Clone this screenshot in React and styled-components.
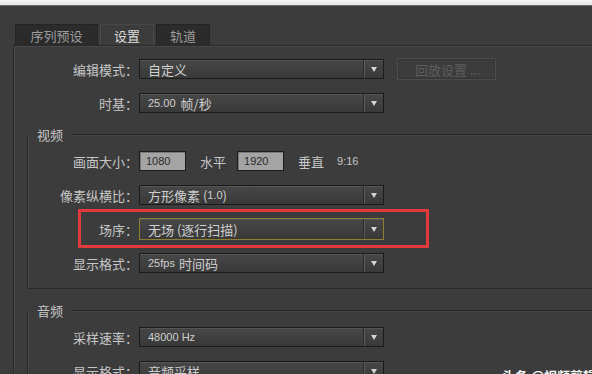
import React from 'react';
import styled, { createGlobalStyle } from 'styled-components';

const Global = createGlobalStyle`
  html, body { margin: 0; padding: 0; background: #3c3c3c; overflow: hidden; }
  body { font-family: "Noto Sans CJK SC", "Liberation Sans", sans-serif; }
`;

const Page = styled.div`
  position: relative;
  width: 592px;
  height: 374px;
  overflow: hidden;
  background: #3c3c3c;
  display: flex;
  flex-direction: column;
`;

const TopStrip = styled.div`
  height: 6px;
  flex-shrink: 0;
  background: linear-gradient(#f4f4f4, #e6e6e6);
  border-bottom: 1px solid #6a6a6a;
  box-sizing: border-box;
`;

const TabBar = styled.div`
  display: flex;
  gap: 2px;
  padding: 18px 0 0 15px;
  height: 21px;
  flex-shrink: 0;
`;

const Tab = styled.div`
  box-sizing: border-box;
  height: 21px;
  width: ${p => p.$w}px;
  display: flex;
  align-items: center;
  justify-content: center;
  font-size: 13px;
  color: ${p => (p.$active ? '#dcdcdc' : '#9c9c9c')};
  background: ${p => (p.$active ? '#3c3c3c' : '#2b2b2b')};
  border: 1px solid ${p => (p.$active ? '#474747' : '#242424')};
  border-bottom: none;
`;

const Panel = styled.div`
  flex: 1;
  margin-left: 13px;
  border-left: 1px solid #2a2a2a;
  border-top: 1px solid #2a2a2a;
  box-shadow: inset 1px 1px 0 #474747;
  padding-top: 13px;
  display: flex;
  flex-direction: column;
`;

const Row = styled.div`
  position: relative;
  display: flex;
  align-items: center;
  height: 20px;
  flex-shrink: 0;
  & + & { margin-top: 14px; }
`;

const Label = styled.div`
  width: ${p => p.$w}px;
  flex-shrink: 0;
  text-align: right;
  white-space: nowrap;
  font-size: 13px;
  color: #c6c6c6;
  margin-right: 1px;
`;

const Select = styled.div`
  box-sizing: border-box;
  width: 245px;
  height: ${p => (p.$focus ? 22 : 20)}px;
  display: flex;
  align-items: stretch;
  border: 1px solid ${p => (p.$focus ? '#8e7e32' : '#1b1b1b')};
  background: linear-gradient(#474747, #393939);
  box-shadow: inset 0 1px 0 #555;
  flex-shrink: 0;
`;

const Value = styled.div`
  flex: 1;
  display: flex;
  align-items: center;
  padding-left: 8px;
  font-size: 13px;
  color: #cfcfcf;
  white-space: nowrap;
`;

const Num = styled.span`
  font-family: "Liberation Sans", Arial, sans-serif;
  font-size: 11px;
  color: ${p => p.$color || 'inherit'};
  margin-right: ${p => p.$mr || 0}px;
`;

const Arrow = styled.div`
  width: 19px;
  display: flex;
  align-items: center;
  justify-content: center;
  border-left: 1px solid #2a2a2a;
  box-shadow: inset 1px 0 0 #5c5c5c;
  &::after {
    content: "";
    width: 0;
    height: 0;
    border-left: 3.5px solid transparent;
    border-right: 3.5px solid transparent;
    border-top: 5px solid #d4d4d4;
  }
`;

const GhostButton = styled.div`
  box-sizing: border-box;
  margin-left: 13px;
  width: 99px;
  height: 22px;
  border: 1px solid #4d4d4d;
  box-shadow: inset 0 0 0 1px #353535;
  display: flex;
  align-items: center;
  padding-left: 17px;
  font-size: 13px;
  color: #5e5e5e;
  white-space: nowrap;
`;

const NumBox = styled.div`
  box-sizing: border-box;
  width: 47px;
  height: 20px;
  border: 1px solid #1c1c1c;
  background: #a4a4a4;
  box-shadow: inset 1px 1px 0 #7a7a7a;
  display: flex;
  align-items: center;
  padding-left: 6px;
  font-family: "Liberation Sans", Arial, sans-serif;
  font-size: 11px;
  color: #2a2a2a;
`;

const Word = styled.span`
  font-size: 13px;
  color: #c6c6c6;
  margin: 0 ${p => p.$r || 0}px 0 ${p => p.$l || 0}px;
  white-space: nowrap;
`;

const Group = styled.div`
  margin-left: 13px;
  margin-top: ${p => p.$mt}px;
  border-left: 1px solid #2a2a2a;
  border-bottom: ${p => (p.$closed ? '1px solid #2a2a2a' : 'none')};
  box-shadow: inset 1px 0 0 #474747;
  padding-bottom: ${p => (p.$closed ? 15 : 0)}px;
  display: flex;
  flex-direction: column;
  flex-shrink: 0;
`;

const GroupHead = styled.div`
  display: flex;
  align-items: center;
  height: 18px;
  margin-top: -9px;
  margin-bottom: 8px;
`;

const GroupTitle = styled.span`
  margin-left: 9px;
  margin-right: 10px;
  font-size: 13px;
  color: #c6c6c6;
`;

const GroupLine = styled.div`
  flex: 1;
  height: 1px;
  background: #262626;
  box-shadow: 0 1px 0 #474747;
`;

const Highlight = styled.div`
  position: absolute;
  left: 50px;
  top: -10px;
  width: 351px;
  height: 39px;
  box-sizing: border-box;
  border: 3px solid #e23a3c;
  pointer-events: none;
`;

const Watermark = styled.div`
  position: absolute;
  left: 502px;
  top: 366px;
  font-size: 13px;
  font-weight: 700;
  color: #f4f4f4;
  white-space: nowrap;
`;

const Dropdown = ({ children, focus }) => (
  <Select $focus={focus}>
    <Value>{children}</Value>
    <Arrow />
  </Select>
);

export default function App() {
  return (
    <Page>
      <Global />
      <TopStrip />
      <TabBar>
        <Tab $w={83}>序列预设</Tab>
        <Tab $w={54} $active>设置</Tab>
        <Tab $w={54}>轨道</Tab>
      </TabBar>
      <Panel>
        <Row>
          <Label $w={124}>编辑模式：</Label>
          <Dropdown>自定义</Dropdown>
          <GhostButton>回放设置 ...</GhostButton>
        </Row>
        <Row>
          <Label $w={124}>时基：</Label>
          <Dropdown><Num $mr={5}>25.00</Num>帧/秒</Dropdown>
        </Row>

        <Group $mt={21} $closed>
          <GroupHead>
            <GroupTitle>视频</GroupTitle>
            <GroupLine />
          </GroupHead>
          <Row>
            <Label $w={110}>画面大小：</Label>
            <NumBox>1080</NumBox>
            <Word $l={14} $r={11}>水平</Word>
            <NumBox>1920</NumBox>
            <Word $l={14} $r={13}>垂直</Word>
            <Num $color="#c6c6c6">9:16</Num>
          </Row>
          <Row>
            <Label $w={110}>像素纵横比：</Label>
            <Dropdown>方形像素 (<Num>1.0</Num>)</Dropdown>
          </Row>
          <Row>
            <Label $w={110}>场序：</Label>
            <Dropdown focus>无场 (逐行扫描)</Dropdown>
            <Highlight />
          </Row>
          <Row>
            <Label $w={110}>显示格式：</Label>
            <Dropdown><Num $mr={4}>25fps</Num>时间码</Dropdown>
          </Row>
        </Group>

        <Group $mt={21}>
          <GroupHead>
            <GroupTitle>音频</GroupTitle>
            <GroupLine />
          </GroupHead>
          <Row>
            <Label $w={110}>采样速率：</Label>
            <Dropdown><Num>48000 Hz</Num></Dropdown>
          </Row>
          <Row>
            <Label $w={110}>显示格式：</Label>
            <Dropdown>音频采样</Dropdown>
          </Row>
        </Group>
      </Panel>
      <Watermark>头条 @视频剪辑</Watermark>
    </Page>
  );
}
